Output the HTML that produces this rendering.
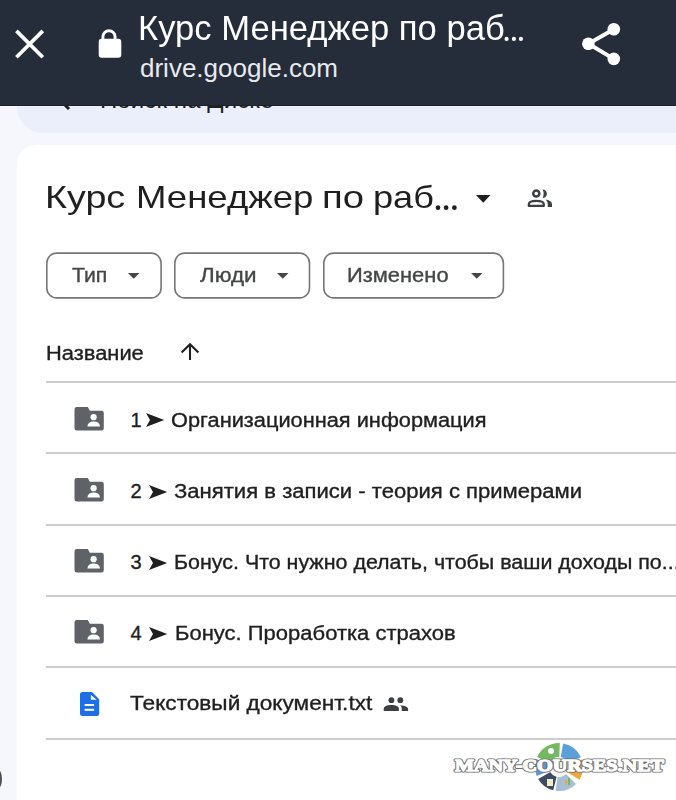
<!DOCTYPE html>
<html><head><meta charset="utf-8">
<style>
html,body{margin:0;padding:0;}
body{width:676px;height:800px;overflow:hidden;position:relative;background:#f6f7fc;font-family:"Liberation Sans",sans-serif;}
.abs{position:absolute;white-space:nowrap;line-height:1;}
#hdr{position:absolute;left:0;top:0;width:676px;height:105px;background:#252c3a;z-index:5;box-shadow:0 1px 0 #1b202a;}
#search{position:absolute;left:17px;top:40px;width:700px;height:92.5px;background:#ebeffb;border-radius:26px;overflow:hidden;}
#card{position:absolute;left:17px;top:145px;width:720px;height:700px;background:#ffffff;border-radius:20px;}
.chip{position:absolute;top:252px;height:44px;border:1.5px solid #777;border-radius:10px;box-sizing:content-box;}
.line{position:absolute;left:46px;width:640px;height:2px;background:#cdcdcd;}
.rt{font-size:20px;color:#1f1f1f;-webkit-text-stroke:0.35px #1f1f1f;}
.ct{font-size:20px;color:#444746;-webkit-text-stroke:0.35px #444746;}
</style></head><body>
<div id="search">
<div class="abs" style="left:83px;top:47.5px;font-size:24px;color:#1f1f1f;letter-spacing:0.1px">Поиск на Диске</div>
<svg class="abs" style="left:38px;top:51px" width="20" height="20" viewBox="0 0 20 20"><path d="M14 2 L6 10 L14 18" stroke="#1f1f1f" stroke-width="3" fill="none"/></svg>
</div>
<div id="hdr">
<svg class="abs" style="left:0;top:0" width="60" height="80" viewBox="0 0 60 80"><path d="M16.4 30.9 L42.8 57.3 M42.8 30.9 L16.4 57.3" stroke="#fff" stroke-width="3.7" fill="none"/></svg>
<svg class="abs" style="left:96px;top:27px" width="28" height="34" viewBox="0 0 28 34"><path d="M6.9 13 V9.9 a6.1 6.1 0 0 1 12.2 0 V13" stroke="#fff" stroke-width="2.9" fill="none"/><rect x="2.7" y="11.7" width="22.6" height="19" rx="3" fill="#fff"/></svg>
<div class="abs" style="left:138px;top:11px;font-size:35.5px;color:#fff;transform:scaleX(0.975);transform-origin:0 0">Курс Менеджер по раб</div>
<svg class="abs" style="left:500px;top:30px" width="30" height="16" viewBox="500 30 30 16"><circle cx="506.6" cy="38.9" r="2.1" fill="#fff"/><circle cx="513.9" cy="38.9" r="2.1" fill="#fff"/><circle cx="520.9" cy="38.9" r="2.1" fill="#fff"/></svg>
<div class="abs" style="left:140px;top:55px;font-size:26px;color:#e8eaed;">drive.google.com</div>
<svg class="abs" style="left:576px;top:17px" width="50" height="55" viewBox="0 0 50 55"><path d="M37.8 12.2 L12.4 26.7 L37.8 41.9" stroke="#fff" stroke-width="4" fill="none"/><circle cx="37.8" cy="12.2" r="6.3" fill="#fff"/><circle cx="12.4" cy="26.7" r="6.3" fill="#fff"/><circle cx="37.8" cy="41.9" r="6.3" fill="#fff"/></svg>
</div>
<div id="card"></div>
<div class="abs" style="left:45.3px;top:180.5px;font-size:32px;color:#1f1f1f;transform:scaleX(1.178);transform-origin:0 0;">Курс</div>
<div class="abs" style="left:135.6px;top:180.5px;font-size:32px;color:#1f1f1f;transform:scaleX(1.142);transform-origin:0 0;">Менеджер</div>
<div class="abs" style="left:321.5px;top:180.5px;font-size:32px;color:#1f1f1f;transform:scaleX(1.195);transform-origin:0 0;">по</div>
<div class="abs" style="left:372.8px;top:180.5px;font-size:32px;color:#1f1f1f;transform:scaleX(1.13);transform-origin:0 0;">раб</div>
<svg class="abs" style="left:430px;top:200px" width="30" height="15" viewBox="430 200 30 15"><circle cx="438" cy="207.7" r="2.35" fill="#1f1f1f"/><circle cx="446.1" cy="207.7" r="2.35" fill="#1f1f1f"/><circle cx="454.4" cy="207.7" r="2.35" fill="#1f1f1f"/></svg>
<svg class="abs" style="left:476px;top:195px" width="15" height="8" viewBox="0 0 15 8"><path d="M0 0 H14.5 L7.25 7.7 Z" fill="#1f1f1f"/></svg>
<svg class="abs" style="left:520px;top:182px" width="40" height="30" viewBox="0 0 40 30"><circle cx="16.3" cy="11.5" r="3.05" stroke="#3c4043" stroke-width="2.5" fill="none"/><path d="M8.85 23.95 V22.3 C8.85 20 12 18.95 16.3 18.95 C20.6 18.95 23.75 20 23.75 22.3 V23.95 Z" stroke="#3c4043" stroke-width="2.3" fill="none" stroke-linejoin="round"/><path d="M22.6 7.4 A4.3 4.3 0 0 1 22.6 16 A10 10 0 0 0 22.6 7.4 Z" fill="#3c4043"/><path d="M25.7 17.6 Q32 18.5 32 22.5 V25.1 H27.8 V22.8 Q27.8 19.6 25.7 17.6 Z" fill="#3c4043"/></svg>
<svg class="abs" style="left:45.4px;top:251px" width="118.3" height="50" viewBox="0 0 118.3 50"><rect x="1.8" y="2.1" width="114.3" height="44.8" rx="10" ry="10" fill="none" stroke="#747775" stroke-width="1.6"/></svg>
<div class="abs ct" style="left:71.5px;top:265px;transform:scaleX(1.06);transform-origin:0 0">Тип</div>
<svg class="abs" style="left:127.6px;top:273.3px" width="12" height="6" viewBox="0 0 12 6"><path d="M0 0 H11.5 L5.75 5.8 Z" fill="#444746"/></svg>
<svg class="abs" style="left:173.2px;top:251px" width="138.7" height="50" viewBox="0 0 138.7 50"><rect x="1.8" y="2.1" width="134.7" height="44.8" rx="10" ry="10" fill="none" stroke="#747775" stroke-width="1.6"/></svg>
<div class="abs ct" style="left:199.5px;top:265px;transform:scaleX(1.12);transform-origin:0 0">Люди</div>
<svg class="abs" style="left:276.6px;top:273.3px" width="12" height="6" viewBox="0 0 12 6"><path d="M0 0 H11.5 L5.75 5.8 Z" fill="#444746"/></svg>
<svg class="abs" style="left:322px;top:251px" width="183.6" height="50" viewBox="0 0 183.6 50"><rect x="1.8" y="2.1" width="179.6" height="44.8" rx="10" ry="10" fill="none" stroke="#747775" stroke-width="1.6"/></svg>
<div class="abs ct" style="left:346.6px;top:265px;transform:scaleX(1.095);transform-origin:0 0">Изменено</div>
<svg class="abs" style="left:470.8px;top:273.3px" width="12" height="6" viewBox="0 0 12 6"><path d="M0 0 H11.5 L5.75 5.8 Z" fill="#444746"/></svg>
<div class="abs" style="left:46.4px;top:342.5px;font-size:20px;color:#1f1f1f;transform:scaleX(1.094);transform-origin:0 0;-webkit-text-stroke:0.35px #1f1f1f;">Название</div>
<svg class="abs" style="left:179px;top:342px" width="22" height="20" viewBox="0 0 22 20"><path d="M11 18 V3 M2.6 10.6 L11 2.2 L19.4 10.6" stroke="#1f1f1f" stroke-width="2.1" fill="none"/></svg>
<div class="line" style="top:381px"></div>
<div class="line" style="top:452px"></div>
<div class="line" style="top:524px"></div>
<div class="line" style="top:595px"></div>
<div class="line" style="top:666px"></div>
<div class="line" style="top:738px"></div>
<svg class="abs" style="left:74px;top:405.5px" width="30" height="25" viewBox="0 0 30 25"><path d="M2.8 1 H13.8 L15.8 4.7 H27.5 A2.3 2.3 0 0 1 29.8 7 V22.2 A2.3 2.3 0 0 1 27.5 24.5 H2.8 A2.3 2.3 0 0 1 0.5 22.2 V3.3 A2.3 2.3 0 0 1 2.8 1 Z" fill="#5f6368"/><circle cx="19.6" cy="11.2" r="3.1" fill="#fff"/><path d="M13.4 20.4 Q13.8 15.6 19.7 15.6 Q25.6 15.6 26 20.4 Z" fill="#fff"/></svg>
<div class="abs rt" style="left:130.5px;top:409.5px;">1</div>
<svg class="abs" style="left:145.5px;top:413.3px" width="19" height="15" viewBox="0 0 19 15"><path d="M0 0 L18.2 7.05 L0 14.1 L4 7.05 Z" fill="#1f1f1f"/></svg>
<div class="abs rt" style="left:171.0px;top:409.5px;transform:scaleX(1.089);transform-origin:0 0">Организационная информация</div>
<svg class="abs" style="left:74px;top:476.8px" width="30" height="25" viewBox="0 0 30 25"><path d="M2.8 1 H13.8 L15.8 4.7 H27.5 A2.3 2.3 0 0 1 29.8 7 V22.2 A2.3 2.3 0 0 1 27.5 24.5 H2.8 A2.3 2.3 0 0 1 0.5 22.2 V3.3 A2.3 2.3 0 0 1 2.8 1 Z" fill="#5f6368"/><circle cx="19.6" cy="11.2" r="3.1" fill="#fff"/><path d="M13.4 20.4 Q13.8 15.6 19.7 15.6 Q25.6 15.6 26 20.4 Z" fill="#fff"/></svg>
<div class="abs rt" style="left:130.5px;top:480.8px;">2</div>
<svg class="abs" style="left:148.7px;top:484.6px" width="19" height="15" viewBox="0 0 19 15"><path d="M0 0 L18.2 7.05 L0 14.1 L4 7.05 Z" fill="#1f1f1f"/></svg>
<div class="abs rt" style="left:173.7px;top:480.8px;transform:scaleX(1.1036);transform-origin:0 0">Занятия в записи - теория с примерами</div>
<svg class="abs" style="left:74px;top:548.1px" width="30" height="25" viewBox="0 0 30 25"><path d="M2.8 1 H13.8 L15.8 4.7 H27.5 A2.3 2.3 0 0 1 29.8 7 V22.2 A2.3 2.3 0 0 1 27.5 24.5 H2.8 A2.3 2.3 0 0 1 0.5 22.2 V3.3 A2.3 2.3 0 0 1 2.8 1 Z" fill="#5f6368"/><circle cx="19.6" cy="11.2" r="3.1" fill="#fff"/><path d="M13.4 20.4 Q13.8 15.6 19.7 15.6 Q25.6 15.6 26 20.4 Z" fill="#fff"/></svg>
<div class="abs rt" style="left:130.5px;top:552.1px;">3</div>
<svg class="abs" style="left:148.7px;top:555.9px" width="19" height="15" viewBox="0 0 19 15"><path d="M0 0 L18.2 7.05 L0 14.1 L4 7.05 Z" fill="#1f1f1f"/></svg>
<div class="abs rt" style="left:173.7px;top:552.1px;transform:scaleX(1.071);transform-origin:0 0">Бонус. Что нужно делать, чтобы ваши доходы по...</div>
<svg class="abs" style="left:74px;top:619.4px" width="30" height="25" viewBox="0 0 30 25"><path d="M2.8 1 H13.8 L15.8 4.7 H27.5 A2.3 2.3 0 0 1 29.8 7 V22.2 A2.3 2.3 0 0 1 27.5 24.5 H2.8 A2.3 2.3 0 0 1 0.5 22.2 V3.3 A2.3 2.3 0 0 1 2.8 1 Z" fill="#5f6368"/><circle cx="19.6" cy="11.2" r="3.1" fill="#fff"/><path d="M13.4 20.4 Q13.8 15.6 19.7 15.6 Q25.6 15.6 26 20.4 Z" fill="#fff"/></svg>
<div class="abs rt" style="left:130.5px;top:623.4px;">4</div>
<svg class="abs" style="left:149.3px;top:627.2px" width="19" height="15" viewBox="0 0 19 15"><path d="M0 0 L18.2 7.05 L0 14.1 L4 7.05 Z" fill="#1f1f1f"/></svg>
<div class="abs rt" style="left:174.6px;top:623.4px;transform:scaleX(1.1);transform-origin:0 0">Бонус. Проработка страхов</div>
<svg class="abs" style="left:80px;top:692px" width="20" height="24" viewBox="0 0 20 24"><path d="M2.5 0 H12 L19.2 7.2 V21.5 A2.5 2.5 0 0 1 16.7 24 H2.5 A2.5 2.5 0 0 1 0 21.5 V2.5 A2.5 2.5 0 0 1 2.5 0 Z" fill="#1d6fe5"/><path d="M10.8 2.7 L16.6 7.8 H10.8 Z" fill="#fff"/><rect x="4.6" y="12" width="9.5" height="2" fill="#fff"/><rect x="4.6" y="16.8" width="9.5" height="2" fill="#fff"/></svg>
<div class="abs rt" style="left:130px;top:692.9px;transform:scaleX(1.132);transform-origin:0 0">Текстовый документ.txt</div>
<svg class="abs" style="left:383px;top:697px" width="26" height="15" viewBox="0 0 26 15"><circle cx="8.4" cy="3.2" r="2.9" fill="#3c4043"/><circle cx="17.3" cy="3.2" r="2.9" fill="#3c4043"/><path d="M0.7 14 V12 C0.7 9.6 4 8.1 8.3 8.1 C12.6 8.1 15.9 9.6 15.9 12 V14 Z" fill="#3c4043"/><path d="M17.2 8.3 C22 8.6 25.1 10 25.1 12.2 V14 H18.8 V12 C18.8 10.6 18.3 9.3 17.2 8.3 Z" fill="#3c4043"/></svg>
<div class="abs" style="left:-7px;top:769px;width:9px;height:20px;border-radius:50%;background:#505050;filter:blur(0.7px)"></div>
<svg class="abs" style="left:0;top:0" width="676" height="800" viewBox="0 0 676 800"><path d="M537.2 756.9 A24 24 0 0 1 559.8 743.0 L559.3 757.0 A10 10 0 0 0 549.9 762.8 Z" fill="#74b860"/><path d="M563.2 743.4 A24 24 0 0 1 580.9 757.2 L568.1 762.9 A10 10 0 0 0 560.7 757.2 Z" fill="#5d9fd8"/><path d="M581.8 759.6 A24 24 0 0 1 579.4 779.7 L567.5 772.3 A10 10 0 0 0 568.5 763.9 Z" fill="#efa73c"/><path d="M576.0 784.0 A24 24 0 0 1 555.7 790.8 L557.6 776.9 A10 10 0 0 0 566.1 774.1 Z" fill="#a6bfd8"/><path d="M553.2 790.3 A24 24 0 0 1 538.2 779.0 L550.3 772.0 A10 10 0 0 0 556.6 776.7 Z" fill="#3d4b62"/><path d="M536.7 776.0 A24 24 0 0 1 536.3 759.2 L549.5 763.7 A10 10 0 0 0 549.7 770.7 Z" fill="#6096cc"/><circle cx="559" cy="767" r="10" fill="#f6f4ef"/><circle cx="551" cy="751" r="3" fill="#fff"/><rect x="547" y="779" width="6" height="7" fill="#f3ecc8"/><rect x="565" y="780" width="2" height="5" fill="#efa73c"/><rect x="568" y="778" width="2" height="7" fill="#74b860"/></svg>
<svg class="abs" style="left:0;top:0" width="676" height="800" viewBox="0 0 676 800"><g font-family="Liberation Serif" font-weight="bold" font-size="17.5"><text x="455" y="771" textLength="209" lengthAdjust="spacingAndGlyphs" fill="none" stroke="#6e6e6e" stroke-width="3.2" stroke-linejoin="round">MANY-COURSES.NET</text><g opacity="1"><text x="455" y="771" textLength="209" lengthAdjust="spacingAndGlyphs" fill="#ffffff" stroke="#ffffff" stroke-width="1.4" stroke-linejoin="round">MANY-COURSES.NET</text></g></g></svg>
</body></html>
